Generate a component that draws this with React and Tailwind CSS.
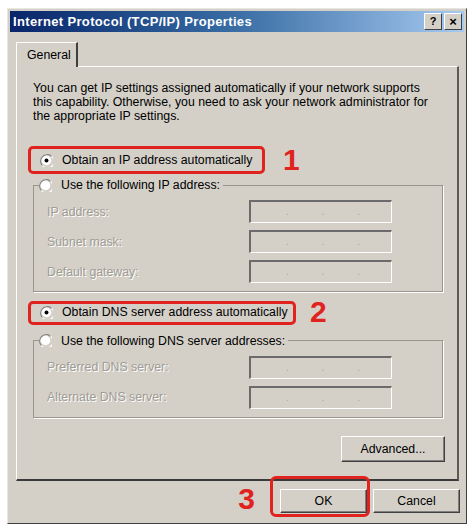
import React from 'react'

const font = { fontFamily: '"Liberation Sans", Arial, sans-serif' }

function Radio({ checked }) {
  return (
    <svg width="13" height="13" viewBox="0 0 12 12" className="shrink-0">
      <path d="M10.2 1.8A6 6 0 0 0 1.8 10.2" fill="none" stroke="#808080" strokeWidth="1" />
      <path d="M11.2 2.6A6 6 0 0 1 2.6 11.2" fill="none" stroke="#ffffff" strokeWidth="1.2" />
      <circle cx="6" cy="6" r="4.4" fill="#ffffff" />
      {checked && <circle cx="6" cy="6" r="1.8" fill="#000000" />}
    </svg>
  )
}

function IpBox() {
  return (
    <div className="w-[143px] h-[23px] border-t-2 border-l-2 border-t-[#6b6b6b] border-l-[#6b6b6b] border-r border-b border-r-white border-b-white bg-[#d4d0c8] flex items-center">
      <div className="flex w-full pl-[35px] gap-[33px] text-[#a8a49c] text-[10px] leading-none">
        <span>.</span>
        <span>.</span>
        <span>.</span>
      </div>
    </div>
  )
}

function Field({ label }) {
  return (
    <div className="flex items-center justify-between pl-[13px] pr-[50px]">
      <span className="text-[#a09c94] [text-shadow:1px_1px_0_#ffffff]">{label}</span>
      <IpBox />
    </div>
  )
}

function Group({ legend, children }) {
  return (
    <fieldset className="ml-[16px] mr-[14px] border border-[#9a968e] shadow-[1px_1px_0_#ffffff] px-0 pb-[8px]">
      <legend className="ml-[5px] pr-[3px] flex items-center gap-[9px] h-[16px]">
        <Radio />
        <span className="text-black">{legend}</span>
      </legend>
      <div className="flex flex-col gap-[7px] mt-[7px]">{children}</div>
    </fieldset>
  )
}

function Marker({ n }) {
  return <span className="text-[#e0231e] font-bold text-[30px] leading-none">{n}</span>
}

function Button({ children, className = '' }) {
  return (
    <div className={`h-[24px] bg-[#d4d0c8] border border-t-white border-l-white border-r-[#404040] border-b-[#404040] shadow-[inset_-1px_-1px_0_#808080] flex items-center justify-center text-black ${className}`}>
      {children}
    </div>
  )
}

export default function App() {
  return (
    <div className="w-[470px] h-[526px] bg-white pt-[8px] pl-[7px] text-[12.3px]" style={font}>
      <div className="w-[460px] h-[516px] bg-[#d4d0c8] border border-t-[#e8e6e0] border-l-[#e8e6e0] border-r-[#404040] border-b-[#404040] p-[2px] flex flex-col">
        {/* title bar */}
        <div className="h-[21px] bg-gradient-to-r from-[#0a246a] via-[#3a6ea5] to-[#a6caf0] flex items-center pl-[3px] pr-[2px]">
          <span className="text-white font-bold text-[13px] tracking-[0.35px] flex-1">Internet Protocol (TCP/IP) Properties</span>
          <div className="flex gap-[2px]">
            <div className="w-[18px] h-[17px] bg-[#d4d0c8] border border-t-white border-l-white border-r-[#404040] border-b-[#404040] flex items-center justify-center text-[11px] font-bold text-black leading-none">?</div>
            <div className="w-[18px] h-[17px] bg-[#d4d0c8] border border-t-white border-l-white border-r-[#404040] border-b-[#404040] flex items-center justify-center text-[13px] font-bold text-black leading-none">×</div>
          </div>
        </div>

        {/* tab */}
        <div className="pl-[6px] pr-[5px] mt-[10px]">
          <div className="w-[62px] h-[25px] border-t border-l border-t-white border-l-white border-r-2 border-r-[#404040] flex items-center pl-[10px] text-black relative z-10 bg-[#d4d0c8] -mb-[1px]">
            General
          </div>

          {/* panel */}
          <div className="h-[415px] border-t border-l border-t-white border-l-white border-r-2 border-b-2 border-r-[#5a5a5a] border-b-[#3a3a3a] flex flex-col">
            <p className="pl-[16px] pt-[14px] leading-[14px] text-black whitespace-nowrap">
              You can get IP settings assigned automatically if your network supports
              <br />
              this capability. Otherwise, you need to ask your network administrator for
              <br />
              the appropriate IP settings.
            </p>

            <div className="flex items-center mt-[22px] ml-[11px]">
              <div className="w-[237px] h-[28px] border-[3px] border-[#e0231e] rounded-[5px] flex items-center pl-[9px] gap-[9px] text-black">
                <Radio checked />
                <span>Obtain an IP address automatically</span>
              </div>
              <span className="ml-[18px]"><Marker n="1" /></span>
            </div>

            <div className="mt-[2px]">
              <Group legend="Use the following IP address:">
                <Field label="IP address:" />
                <Field label="Subnet mask:" />
                <Field label="Default gateway:" />
              </Group>
            </div>

            <div className="flex items-center mt-[5px] ml-[11px]">
              <div className="w-[268px] h-[24px] border-[3px] border-[#e0231e] rounded-[5px] flex items-center pl-[9px] gap-[9px] text-black">
                <Radio checked />
                <span>Obtain DNS server address automatically</span>
              </div>
              <span className="ml-[14px]"><Marker n="2" /></span>
            </div>

            <div className="mt-[5px]">
              <Group legend="Use the following DNS server addresses:">
                <Field label="Preferred DNS server:" />
                <Field label="Alternate DNS server:" />
              </Group>
            </div>

            <div className="flex justify-end mt-[18px] mr-[12px]">
              <Button className="w-[104px] h-[26px]">Advanced...</Button>
            </div>
          </div>

          {/* bottom buttons */}
          <div className="flex items-center justify-end mt-[7px] mr-[-1px]">
            <span className="mr-[15px] mt-[-4px]"><Marker n="3" /></span>
            <div className="border-[3px] border-[#e0231e] rounded-[6px] pt-[10px] pb-[1px] pl-[7px] -mt-[13px] -mb-[4px] mr-[3px]">
              <Button className="w-[87px]">OK</Button>
            </div>
            <Button className="w-[87px]">Cancel</Button>
          </div>
        </div>
      </div>
    </div>
  )
}
